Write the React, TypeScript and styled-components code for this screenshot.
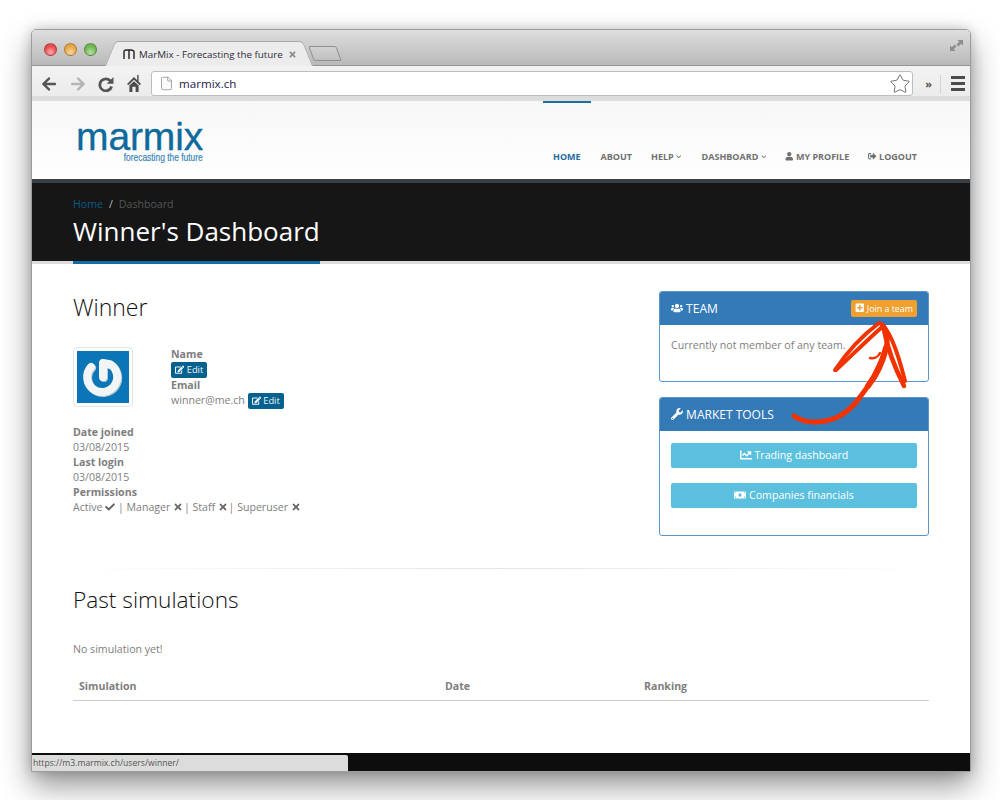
import styled, { createGlobalStyle } from 'styled-components';
import { FaArrowLeft, FaArrowRight, FaCheck, FaChevronDown, FaPlusSquare, FaTimes, FaUser, FaUsers, FaWrench, FaEdit, FaSignOutAlt, FaChartLine, FaMoneyBill } from 'react-icons/fa';
import { File, Star } from 'lucide-react';

const GlobalStyle = createGlobalStyle`
  html, body {
    margin: 0;
    padding: 0;
    background: #fff;
  }
  body {
    font-family: 'Open Sans', 'Liberation Sans', sans-serif;
    font-size: 10.6px;
    line-height: 15px;
    color: #7e7e7e;
  }
  * {
    box-sizing: border-box;
  }
`;

function App() {
  return (
    <>
      <GlobalStyle />
      <Desktop>
        <Window>
          <TitleBar>
            <Lights>
              <Light $color="#ee4b4f" />
              <Light $color="#e9a641" />
              <Light $color="#6fb84f" />
            </Lights>
            <Tab>
              <TabMark viewBox="0 0 12 10">
                <path d="M1 10V3q0-2 2-2h4.5Q11 1 11 3v7M6 10V1" fill="none" stroke="#222" strokeWidth="1.4" />
              </TabMark>
              <TabTitle>MarMix - Forecasting the future</TabTitle>
              <TabClose>
                <FaTimes />
              </TabClose>
            </Tab>
            <NewTab />
            <Expand viewBox="0 0 16 14">
              <path d="M9 1h6v6l-2-2-3 3-2-2 3-3zM1 7l2 2 3-3 2 2-3 3 2 2H1z" fill="#8d8d8d" />
            </Expand>
          </TitleBar>
          <Toolbar>
            <ToolIcon $color="#555" $left={9}>
              <FaArrowLeft />
            </ToolIcon>
            <ToolIcon $color="#b5b5b5" $left={13}>
              <FaArrowRight />
            </ToolIcon>
            <ToolIcon $color="#555" $left={12}>
              <svg viewBox="0 0 16 16" width="16" height="16">
                <path d="M12.6 5.2A6 6 0 1 0 13.6 10.5" fill="none" stroke="#555" strokeWidth="2.8" />
                <path d="M15.5 1v6.8H8.7z" fill="#555" />
              </svg>
            </ToolIcon>
            <ToolIcon $color="#555" $left={13}>
              <svg viewBox="0 0 14 17" width="14" height="17">
                <path d="M7 2 0 9l1.3 1.3L7 4.8l5.7 5.5L14 9l-2.4-2.4V0h-1.4v5.2z" fill="#4c4c4c" />
                <path d="M2.4 10.6 7 6.2l4.6 4.4V17H8.6v-5.2H5.4V17h-3z" fill="#4c4c4c" />
              </svg>
            </ToolIcon>
            <UrlBar>
              <File size={15} color="#888" strokeWidth={1.2} fill="#fafafa" />
              <UrlText>marmix.ch</UrlText>
              <Star size={22} color="#666" strokeWidth={1} />
            </UrlBar>
            <More>»</More>
            <ToolDivider />
            <Burger>
              <span />
              <span />
              <span />
            </Burger>
          </Toolbar>
          <Page>
            <Header>
              <Logo>
                <LogoName>marmix</LogoName>
                <LogoTag>forecasting the future</LogoTag>
              </Logo>
              <Nav>
                <NavItem $active>Home</NavItem>
                <NavItem>About</NavItem>
                <NavItem $extra={1}>
                  Help <Caret />
                </NavItem>
                <NavItem>
                  Dashboard <Caret />
                </NavItem>
                <NavItem>
                  <FaUser /> My profile
                </NavItem>
                <NavItem>
                  <FaSignOutAlt /> Logout
                </NavItem>
              </Nav>
            </Header>
            <Band>
              <Crumbs>
                <CrumbLink>Home</CrumbLink>
                <CrumbSep>/</CrumbSep>
                <CrumbCurrent>Dashboard</CrumbCurrent>
              </Crumbs>
              <PageTitle>Winner's Dashboard</PageTitle>
            </Band>
            <Main>
              <Columns>
                <Profile>
                  <SectionTitle>Winner</SectionTitle>
                  <Identity>
                    <Avatar>
                      <AvatarImage>
                        <svg viewBox="0 0 52 52" width="52" height="52">
                          <g fill="none" stroke="#b4c7d4" strokeWidth="8" strokeLinecap="round" strokeLinejoin="round" transform="translate(1 1)">
                            <path d="M14 16A15 15 0 1 0 33 13.2L26 12v14" />
                          </g>
                          <g fill="none" stroke="#f2f5f6" strokeWidth="8" strokeLinecap="round" strokeLinejoin="round">
                            <path d="M14 16A15 15 0 1 0 33 13.2L26 12v14" />
                          </g>
                        </svg>
                      </AvatarImage>
                    </Avatar>
                    <Fields>
                      <Label>Name</Label>
                      <FieldRow>
                        <EditButton>
                          <FaEdit /> Edit
                        </EditButton>
                      </FieldRow>
                      <Label>Email</Label>
                      <FieldRow>
                        winner@me.ch{' '}
                        <EditButton>
                          <FaEdit /> Edit
                        </EditButton>
                      </FieldRow>
                    </Fields>
                  </Identity>
                  <Details>
                    <Label>Date joined</Label>
                    <div>03/08/2015</div>
                    <Label>Last login</Label>
                    <div>03/08/2015</div>
                    <Label>Permissions</Label>
                    <div>
                      Active <FaCheck /> | Manager <Cross /> | Staff <Cross /> | Superuser <Cross />
                    </div>
                  </Details>
                </Profile>
                <Side>
                  <Panel>
                    <PanelHeader>
                      <span>
                        <FaUsers /> TEAM
                      </span>
                      <JoinButton>
                        <FaPlusSquare /> Join a team
                      </JoinButton>
                    </PanelHeader>
                    <PanelBody $height={56} $top={13}>
                      Currently not member of any team.
                    </PanelBody>
                  </Panel>
                  <Panel>
                    <PanelHeader>
                      <span>
                        <FaWrench /> MARKET TOOLS
                      </span>
                    </PanelHeader>
                    <PanelBody $height={104} $top={12}>
                      <ToolButton>
                        <FaChartLine /> Trading dashboard
                      </ToolButton>
                      <ToolButton>
                        <FaMoneyBill /> Companies financials
                      </ToolButton>
                    </PanelBody>
                  </Panel>
                  <Scribble viewBox="659 291 270 150">
                    <g fill="none" stroke="#f23300" strokeLinecap="round" strokeLinejoin="round">
                      <path d="M794 416c6 4 12 6 20 6 9 0 17-2 24-5 9-5 16-11 22-20 7-9 13-18 17-27 5-10 9-20 10-27 1-7-1-12-3-16" strokeWidth="5" />
                      <path d="M868 386c8-10 14-22 18-38" strokeWidth="6" />
                      <path d="M835 370c8-12 24-32 44-47" strokeWidth="4" />
                      <path d="M836 370c10-9 28-27 46-43" strokeWidth="4" />
                      <path d="M880 323c10 6 18 30 25 58" strokeWidth="4" />
                      <path d="M884 330c3 16 10 36 20 56" strokeWidth="4.5" />
                      <path d="M870 358c4 1 8-1 10-5" strokeWidth="2.5" />
                    </g>
                  </Scribble>
                </Side>
              </Columns>
              <Rule />
              <SectionTitle $size={22.7}>Past simulations</SectionTitle>
              <EmptyNote>No simulation yet!</EmptyNote>
              <SimTable>
                <span>Simulation</span>
                <span>Date</span>
                <span>Ranking</span>
              </SimTable>
            </Main>
            <Footer>
              <StatusBubble>https://m3.marmix.ch/users/winner/</StatusBubble>
            </Footer>
          </Page>
        </Window>
      </Desktop>
    </>
  );
}

const Desktop = styled.div`
  width: 1000px;
  height: 800px;
  padding: 29px 29px 0 31px;
  overflow: hidden;
  background: #fff;
`;

const Window = styled.div`
  width: 940px;
  height: 743px;
  display: flex;
  flex-direction: column;
  border: 1px solid #9c9c9c;
  border-radius: 5px 5px 0 0;
  overflow: hidden;
  box-shadow: 0 14px 30px rgba(0, 0, 0, 0.42), 0 0 12px rgba(0, 0, 0, 0.18);
`;

const TitleBar = styled.div`
  height: 36px;
  flex: none;
  display: flex;
  align-items: flex-end;
  background: linear-gradient(#dedede, #b9b9b9);
  border-bottom: 1px solid #949494;
`;

const Lights = styled.div`
  display: flex;
  gap: 7px;
  align-self: flex-start;
  padding: 13px 0 0 12px;
`;

const Light = styled.span<{ $color: string }>`
  width: 13px;
  height: 13px;
  border-radius: 50%;
  border: 1px solid rgba(0, 0, 0, 0.28);
  background: radial-gradient(circle at 50% 75%, #fff8 0, transparent 60%), ${(p) => p.$color};
`;

const Tab = styled.div`
  position: relative;
  width: 186px;
  height: 25px;
  margin: 0 0 -1px 19px;
  padding: 0 5px 0 7px;
  display: flex;
  align-items: center;
  gap: 4px;
  background: #ececec;
  border-top: 1px solid #a8a8a8;
  border-radius: 4px 4px 0 0;

  &::before,
  &::after {
    content: '';
    position: absolute;
    top: -1px;
    bottom: 0;
    width: 14px;
    background: #ececec;
    border-top: 1px solid #a8a8a8;
  }
  &::before {
    left: -6px;
    transform: skewX(-22deg);
    border-left: 1px solid #a8a8a8;
    border-radius: 4px 0 0 0;
  }
  &::after {
    right: -6px;
    transform: skewX(22deg);
    border-right: 1px solid #a8a8a8;
    border-radius: 0 4px 0 0;
  }
`;

const TabMark = styled.svg`
  position: relative;
  z-index: 1;
  width: 12px;
  height: 10px;
  flex: none;
`;

const TabTitle = styled.span`
  position: relative;
  z-index: 1;
  font-size: 9.8px;
  white-space: nowrap;
  color: #2c2c3a;
`;

const TabClose = styled.span`
  position: relative;
  z-index: 1;
  display: flex;
  margin-left: 1px;
  font-size: 9px;
  color: #8d8d8d;
`;

const NewTab = styled.div`
  width: 28px;
  height: 15px;
  margin: 0 0 4px 9px;
  border: 1px solid #8f8f8f;
  border-radius: 2px;
  background: linear-gradient(#d2d2d2, #bfbfbf);
  transform: skewX(20deg);
`;

const Expand = styled.svg`
  width: 15px;
  height: 13px;
  margin: 0 6px 13px auto;
`;

const Toolbar = styled.div`
  height: 35px;
  flex: none;
  display: flex;
  align-items: center;
  padding: 0 5px 0 0;
  background: linear-gradient(#f2f2f2 0, #ececec 86%, #dcdcdc 86%, #dcdcdc 100%);
`;

const ToolIcon = styled.span<{ $color: string; $left: number }>`
  display: flex;
  margin-left: ${(p) => p.$left}px;
  font-size: 16px;
  color: ${(p) => p.$color};
`;

const UrlBar = styled.div`
  width: 763px;
  height: 25px;
  margin-left: 10px;
  padding: 0 1px 0 7px;
  display: flex;
  align-items: center;
  gap: 5px;
  background: #fff;
  border: 1px solid #bdbdbd;
  border-radius: 3px;
`;

const UrlText = styled.span`
  flex: 1;
  font-size: 11.6px;
  color: #1b1b45;
`;

const More = styled.span`
  margin-left: 12px;
  font-size: 11px;
  font-weight: 700;
  color: #555;
`;

const ToolDivider = styled.span`
  width: 1px;
  height: 18px;
  margin: 0 10px 0 8px;
  background: #d2d2d2;
`;

const Burger = styled.div`
  width: 14px;
  display: flex;
  flex-direction: column;
  gap: 3px;

  span {
    height: 3px;
    background: #4b4b4b;
  }
`;

const Page = styled.div`
  flex: 1;
  min-height: 0;
  display: flex;
  flex-direction: column;
  background: #fff;
`;

const Header = styled.header`
  height: 78px;
  flex: none;
  display: flex;
  justify-content: space-between;
  padding: 0 53px 0 45px;
  background: linear-gradient(#f7f7f7, #fff);
`;

const Logo = styled.div`
  display: flex;
  flex-direction: column;
  align-items: flex-end;
  width: 126px;
  padding-top: 19px;
`;

const LogoName = styled.div`
  font-family: 'Liberation Sans', Arial, sans-serif;
  font-size: 39px;
  line-height: 34px;
  letter-spacing: -0.15px;
  color: #0f6a9c;
  -webkit-text-stroke: 0.35px #0f6a9c;
`;

const LogoTag = styled.div`
  margin-top: -1px;
  font-family: 'Liberation Sans', Arial, sans-serif;
  font-size: 10.5px;
  line-height: 9px;
  white-space: nowrap;
  color: #3a86b6;
  -webkit-text-stroke: 0.2px #3a86b6;
  transform: scaleX(0.8);
  transform-origin: right center;
`;

const Nav = styled.nav`
  display: flex;
  gap: 19px;
`;

const NavItem = styled.a<{ $active?: boolean; $extra?: number }>`
  display: block;
  height: 78px;
  padding-top: 48px;
  font-size: 9px;
  font-weight: 700;
  line-height: 16px;
  text-transform: uppercase;
  white-space: nowrap;
  color: ${(p) => (p.$active ? '#1f6a9f' : '#707070')};
  box-shadow: ${(p) => (p.$active ? '0 2px 0 #1a6fa3 inset' : 'none')};
  margin: ${(p) => (p.$active ? '0 -9px 0 -10px' : `0 ${p.$extra ?? 0}px 0 0`)};
  padding-left: ${(p) => (p.$active ? '10px' : '0')};
  padding-right: ${(p) => (p.$active ? '10px' : '0')};

  svg {
    font-size: 8.5px;
    vertical-align: -0.5px;
  }
`;

const Caret = styled(FaChevronDown)`
  && {
    font-size: 5.5px;
    vertical-align: 1px;
  }
`;

const Band = styled.section`
  height: 82px;
  flex: none;
  padding: 14px 41px 0;
  background: #161616;
  border-top: 4px solid #3a3f44;
  box-shadow: 0 3px 0 #dcdcdc;
`;

const Crumbs = styled.div`
  display: flex;
  gap: 6px;
  line-height: 15px;
`;

const CrumbLink = styled.span`
  color: #0b5a86;
`;

const CrumbSep = styled.span`
  color: #b9b9b9;
`;

const CrumbCurrent = styled.span`
  color: #555;
`;

const PageTitle = styled.h1`
  position: relative;
  width: fit-content;
  height: 47px;
  margin: 2px 0 0;
  font-size: 26px;
  font-weight: 400;
  line-height: 34px;
  color: #fff;
  box-shadow: 0 3px 0 #0f6fa5;
`;

const Main = styled.main`
  flex: 1;
  margin-top: 3px;
  padding: 27px 41px 0;
`;

const Columns = styled.div`
  display: flex;
  justify-content: space-between;
`;

const Profile = styled.div`
  flex: 1;
`;

const SectionTitle = styled.h2<{ $size?: number }>`
  margin: 0;
  font-size: ${(p) => p.$size ?? 23}px;
  font-weight: 300;
  line-height: 33px;
  color: #111;
`;

const Identity = styled.div`
  display: flex;
  gap: 38px;
  height: 60px;
  margin-top: 23px;
`;

const Avatar = styled.div`
  width: 60px;
  height: 60px;
  padding: 3px;
  background: #fff;
  border: 1px solid #e4e4e4;
  border-radius: 4px;
`;

const AvatarImage = styled.div`
  width: 52px;
  height: 52px;
  background: #0a76b8;
`;

const Fields = styled.div``;

const FieldRow = styled.div`
  height: 16px;
  line-height: 15px;
`;

const Label = styled.div`
  font-weight: 700;
  color: #7e7e7e;
`;

const EditButton = styled.button`
  height: 16px;
  padding: 0 4px;
  border: 0;
  border-radius: 2px;
  font-family: inherit;
  font-size: 9.3px;
  line-height: 16px;
  color: #eef5f9;
  background: #07618f;
  vertical-align: top;

  svg {
    vertical-align: -1px;
  }
`;

const Details = styled.div`
  margin-top: 18px;

  svg {
    font-size: 10px;
    vertical-align: -1px;
    color: #666;
  }
`;

const Cross = styled(FaTimes)`
  margin-right: -2px;
`;

const Side = styled.aside`
  position: relative;
  width: 270px;
  flex: none;
  display: flex;
  flex-direction: column;
  gap: 15px;
`;

const Panel = styled.div`
  border: 1px solid #5c95c7;
  border-radius: 3px;
  overflow: hidden;
`;

const PanelHeader = styled.div`
  height: 34px;
  margin: -1px -1px 0;
  padding: 0 12px;
  display: flex;
  align-items: center;
  justify-content: space-between;
  font-size: 12px;
  color: #fff;
  background: #337ab7;

  svg {
    font-size: 12px;
    vertical-align: -1.5px;
  }
`;

const JoinButton = styled.span`
  height: 17px;
  padding: 0 4px;
  font-size: 8.9px;
  line-height: 17px;
  border-radius: 2px;
  background: #efa02e;

  svg {
    font-size: 9.5px;
    vertical-align: -1px;
  }
`;

const PanelBody = styled.div<{ $height: number; $top: number }>`
  height: ${(p) => p.$height}px;
  padding: ${(p) => p.$top}px 11px 0;
  display: flex;
  flex-direction: column;
  gap: 15px;
`;

const ToolButton = styled.div`
  height: 25px;
  text-align: center;
  line-height: 25px;
  color: #fff;
  background: #5bc0de;
  border-radius: 2px;

  svg {
    font-size: 12px;
    vertical-align: -2px;
  }
`;

const Scribble = styled.svg`
  position: absolute;
  left: 0;
  top: 0;
  width: 270px;
  height: 150px;
  overflow: visible;
  pointer-events: none;
`;

const Rule = styled.hr`
  height: 1px;
  margin: 32px 0 14px;
  border: 0;
  background: linear-gradient(90deg, #fff, #e4e4e4 50%, #fff);
`;

const EmptyNote = styled.p`
  margin: 26px 0 0;
`;

const SimTable = styled.div`
  display: grid;
  grid-template-columns: 366px 199px 1fr;
  height: 29px;
  margin-top: 15px;
  padding: 7px 6px 0;
  font-weight: 700;
  border-bottom: 1px solid #ccc;
`;

const Footer = styled.footer`
  height: 18px;
  flex: none;
  padding-top: 2px;
  background: #0d0d0d;
`;

const StatusBubble = styled.div`
  width: 316px;
  height: 16px;
  padding-left: 1px;
  font-size: 8.6px;
  line-height: 16px;
  color: #555;
  background: #dcdcdc;
  border-radius: 0 2px 0 0;
`;

export default App;
